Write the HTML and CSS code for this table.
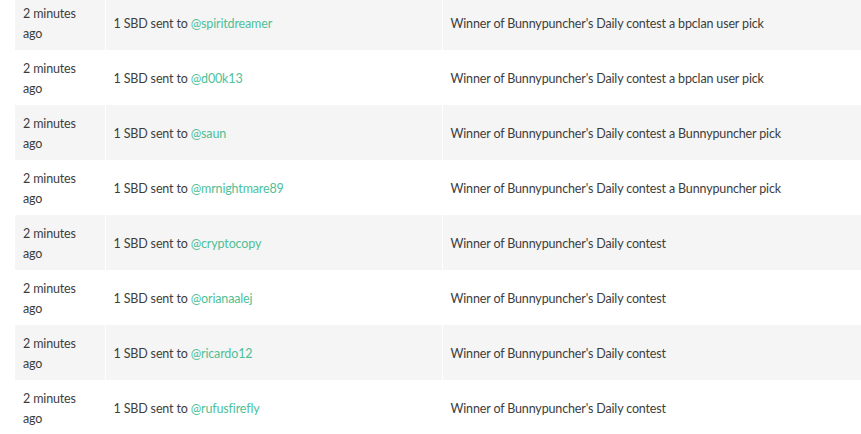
FILE: index.html
```html
<!DOCTYPE html>
<html>
<head>
<meta charset="utf-8">
<link rel="stylesheet" href="styles.css">
</head>
<body>
<div class="wrap">
<table class="log">
<colgroup><col class="c-time"><col class="c-msg"><col class="c-memo"></colgroup>
<tbody>
<tr><td>2 minutes ago</td><td>1 SBD sent to <a href="#">@spiritdreamer</a></td><td>Winner of Bunnypuncher's Daily contest a bpclan user pick</td></tr>
<tr><td>2 minutes ago</td><td>1 SBD sent to <a href="#">@d00k13</a></td><td>Winner of Bunnypuncher's Daily contest a bpclan user pick</td></tr>
<tr><td>2 minutes ago</td><td>1 SBD sent to <a href="#">@saun</a></td><td>Winner of Bunnypuncher's Daily contest a Bunnypuncher pick</td></tr>
<tr><td>2 minutes ago</td><td>1 SBD sent to <a href="#">@mrnightmare89</a></td><td>Winner of Bunnypuncher's Daily contest a Bunnypuncher pick</td></tr>
<tr><td>2 minutes ago</td><td>1 SBD sent to <a href="#">@cryptocopy</a></td><td>Winner of Bunnypuncher's Daily contest</td></tr>
<tr><td>2 minutes ago</td><td>1 SBD sent to <a href="#">@orianaalej</a></td><td>Winner of Bunnypuncher's Daily contest</td></tr>
<tr><td>2 minutes ago</td><td>1 SBD sent to <a href="#">@ricardo12</a></td><td>Winner of Bunnypuncher's Daily contest</td></tr>
<tr><td>2 minutes ago</td><td>1 SBD sent to <a href="#">@rufusfirefly</a></td><td>Winner of Bunnypuncher's Daily contest</td></tr>
</tbody>
</table>
</div>
</body>
</html>
```
FILE: styles.css
```css
html, body {
  margin: 0;
  padding: 0;
  background: #fff;
  overflow: hidden;
}
.wrap {
  margin-top: -5px;
  padding-left: 15px;
  width: 1000px;
}
.log {
  border-collapse: collapse;
  width: 960px;
  table-layout: fixed;
  font-family: "Lato", "Liberation Sans", sans-serif;
  font-size: 12.5px;
  letter-spacing: -0.15px;
  line-height: 20px;
  color: #3d3d3d;
}
.c-time { width: 90px; }
.c-msg { width: 337px; }
.log td {
  padding: 9px 8px 6px 8px;
  height: 40px;
  vertical-align: middle;
  border-left: 1px solid #fff;
}
.log td:first-child { border-left: 0; }
.log tr:nth-child(odd) td { background: #f5f5f5; }
.log a {
  color: #4fbf98;
  text-decoration: none;
}
```
